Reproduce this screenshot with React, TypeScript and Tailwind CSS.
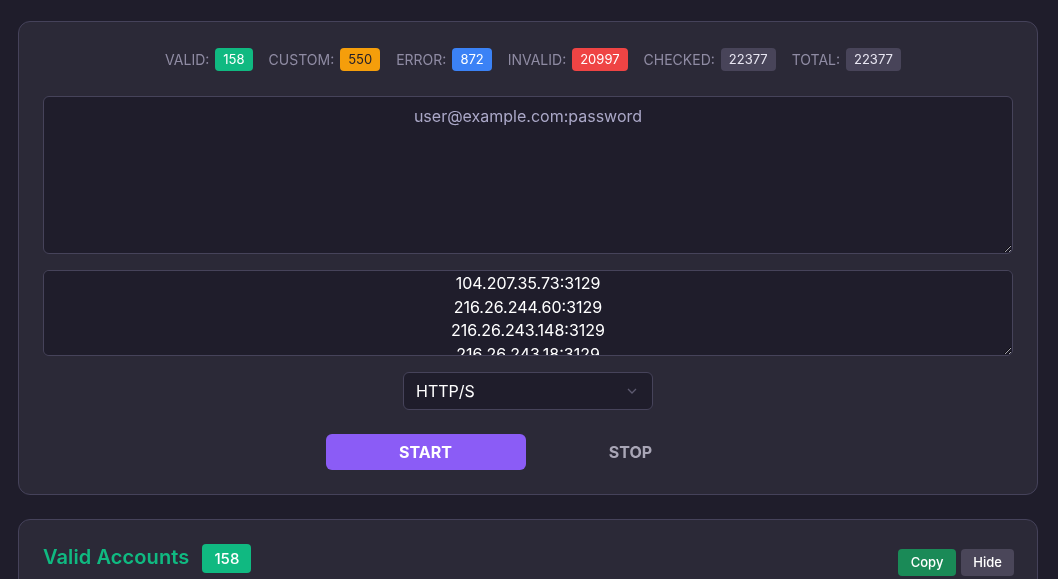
import React, { useState } from 'react';

type Stat = { label: string; value: number; className: string };

const stats: Stat[] = [
  { label: 'VALID:', value: 158, className: 'bg-[#10b981] text-white' },
  { label: 'CUSTOM:', value: 550, className: 'bg-[#f59e0b] text-[#1f1d2b]' },
  { label: 'ERROR:', value: 872, className: 'bg-[#3b82f6] text-white' },
  { label: 'INVALID:', value: 20997, className: 'bg-[#ef4444] text-white' },
  { label: 'CHECKED:', value: 22377, className: 'bg-[#484459] text-[#e8e6f2]' },
  { label: 'TOTAL:', value: 22377, className: 'bg-[#484459] text-[#e8e6f2]' },
];

const defaultProxies = [
  '104.207.35.73:3129',
  '216.26.244.60:3129',
  '216.26.243.148:3129',
  '216.26.243.18:3129',
  '216.26.242.91:3129',
].join('\n');

export default function App() {
  const [combos, setCombos] = useState('');
  const [proxies, setProxies] = useState(defaultProxies);
  const [proxyType, setProxyType] = useState('http');

  return (
    <div className="min-h-screen bg-[#1f1d2b] pt-[21px] pl-[18px] pr-[20px] font-['Inter',sans-serif]">
      <div className="rounded-xl border border-[#45425a] bg-[#2b2937] px-[24px] pt-[26px] pb-[24px]">
        <div className="flex items-center justify-center gap-[16px] pl-[10px]">
          {stats.map((s) => (
            <div key={s.label} className="flex items-center gap-[6px]">
              <span className="text-[14px] text-[#8f8ba3]">{s.label}</span>
              <span className={`rounded-[4px] px-[8px] py-[4px] text-[13px] leading-[15px] ${s.className}`}>
                {s.value}
              </span>
            </div>
          ))}
        </div>

        <textarea
          value={combos}
          onChange={(e) => setCombos(e.target.value)}
          placeholder="user@example.com:password"
          className="mt-[25px] block h-[158px] w-full rounded-md border border-[#46435a] bg-[#1f1d2b] px-3 py-[7px] text-center text-[16px] text-white placeholder:text-[#aba8c8] outline-none"
        />

        <textarea
          value={proxies}
          onChange={(e) => setProxies(e.target.value)}
          className="mt-[16px] block h-[86px] w-full rounded-md border border-[#46435a] bg-[#1f1d2b] px-3 pt-[1px] text-center text-[16px] leading-[23.5px] text-white outline-none"
        />

        <div className="mt-[16px] flex justify-center">
          <div className="relative w-[250px]">
            <select
              value={proxyType}
              onChange={(e) => setProxyType(e.target.value)}
              className="block h-[38px] w-full appearance-none rounded-md border border-[#46435a] bg-[#1f1d2b] pl-[12px] text-[16px] text-white outline-none"
            >
              <option value="http">HTTP/S</option>
              <option value="socks4">SOCKS4</option>
              <option value="socks5">SOCKS5</option>
            </select>
            <svg
              className="pointer-events-none absolute right-[16px] top-[16px]"
              width="10"
              height="6"
              viewBox="0 0 10 6"
              fill="none"
            >
              <path d="M1 1l4 4 4-4" stroke="#5d5a70" strokeWidth="1.3" />
            </svg>
          </div>
        </div>

        <div className="mt-[24px] flex justify-center gap-[5px]">
          <button className="h-[36px] w-[200px] rounded-md bg-[#8b5cf6] text-[16px] font-bold text-white">
            START
          </button>
          <button className="h-[36px] w-[200px] rounded-md text-[16px] font-bold text-[#a9a6b6]">STOP</button>
        </div>
      </div>

      <div className="mt-[24px] rounded-xl border border-[#45425a] bg-[#2b2937] pl-[24px] pr-[23px] pt-[24px] pb-[24px]">
        <div className="flex items-start justify-between">
          <div className="flex items-center gap-[13px]">
            <h2 className="mb-[3px] text-[20px] font-semibold leading-[26px] tracking-[0.1px] text-[#10b981]">
              Valid Accounts
            </h2>
            <span className="rounded-[4px] bg-[#10b981] px-[12px] py-[4px] text-[15px] font-medium leading-[21px] text-white">
              158
            </span>
          </div>
          <div className="mt-[5px] flex gap-[5px]">
            <button className="h-[27px] rounded-[4px] bg-[#1a8a57] px-[13px] text-[13px] font-medium text-white">
              Copy
            </button>
            <button className="h-[27px] rounded-[4px] bg-[#4a4659] px-[12px] text-[13px] font-medium text-white">
              Hide
            </button>
          </div>
        </div>
      </div>
    </div>
  );
}
